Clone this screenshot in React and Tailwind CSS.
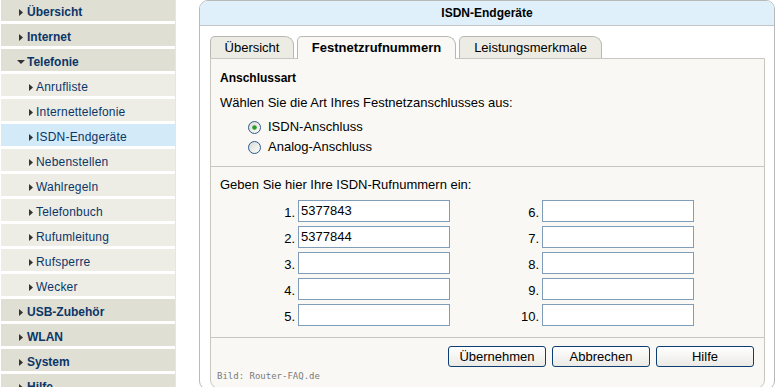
import React from 'react';

const menu = [
  { name: 'Übersicht', level: 0 },
  { name: 'Internet', level: 0 },
  { name: 'Telefonie', level: 0, open: true },
  { name: 'Anrufliste', level: 1 },
  { name: 'Internettelefonie', level: 1 },
  { name: 'ISDN-Endgeräte', level: 1, active: true },
  { name: 'Nebenstellen', level: 1 },
  { name: 'Wahlregeln', level: 1 },
  { name: 'Telefonbuch', level: 1 },
  { name: 'Rufumleitung', level: 1 },
  { name: 'Rufsperre', level: 1 },
  { name: 'Wecker', level: 1 },
  { name: 'USB-Zubehör', level: 0 },
  { name: 'WLAN', level: 0 },
  { name: 'System', level: 0 },
  { name: 'Hilfe', level: 0 },
];

const numbers = ['5377843', '5377844', '', '', '', '', '', '', '', ''];

const ArrowRight = () => (
  <svg width="4" height="7" viewBox="0 0 4 7" className="shrink-0">
    <path d="M0 0 L4 3.5 L0 7 Z" fill="#333333" />
  </svg>
);

const ArrowDown = () => (
  <svg width="8" height="4" viewBox="0 0 8 4" className="shrink-0">
    <path d="M0 0 L8 0 L4 4 Z" fill="#333333" />
  </svg>
);

const Radio = ({ checked }) => (
  <svg width="13" height="13" viewBox="0 0 13 13" className="shrink-0">
    <defs>
      <linearGradient id={checked ? 'rg1' : 'rg2'} x1="0" y1="0" x2="1" y2="1">
        <stop offset="0" stopColor="#d8d8d2" />
        <stop offset="1" stopColor="#ffffff" />
      </linearGradient>
    </defs>
    <circle cx="6.5" cy="6.5" r="6" fill={`url(#${checked ? 'rg1' : 'rg2'})`} stroke="#2a5a8a" strokeWidth="1" />
    {checked && <circle cx="6.5" cy="6.5" r="2.3" fill="#2b9b2b" />}
  </svg>
);

const Sidebar = () => (
  <div className="w-[176px] pl-px mt-[-1px] flex flex-col gap-[3px] border-r border-[#e6e6de]">
    {menu.map((item) => {
      const bg = item.active ? 'bg-[#d3eaf8]' : item.level === 0 ? 'bg-[#e0dfd3]' : 'bg-[#edece5]';
      return (
        <div key={item.name} className={`h-[22px] shrink-0 flex items-center pt-[4px] ${bg}`}>
          {item.level === 0 ? (
            item.open ? (
              <div className="pl-[16px] flex items-center gap-[2px]">
                <ArrowDown />
                <span className="text-[12px] font-bold text-[#0b3668]">{item.name}</span>
              </div>
            ) : (
              <div className="pl-[18px] flex items-center gap-[4px]">
                <ArrowRight />
                <span className="text-[12px] font-bold text-[#0b3668]">{item.name}</span>
              </div>
            )
          ) : (
            <div className="pl-[28px] flex items-center gap-[3px]">
              <ArrowRight />
              <span className="text-[12px] text-[#0b3668] tracking-[0.2px]">{item.name}</span>
            </div>
          )}
        </div>
      );
    })}
  </div>
);

const NumberGroup = ({ start, labelW }) => (
  <div className="flex flex-col gap-[4px]">
    {numbers.slice(start, start + 5).map((n, i) => (
      <div key={i} className="flex items-center h-[22px]">
        <span className={`${labelW} text-right text-[13px] pt-[3px]`}>{start + i + 1}.</span>
        <div className="ml-[3px] w-[152px] h-[22px] border border-[#7f9db9] bg-white text-[13px] leading-[20px] pl-[2px]">
          {n}
        </div>
      </div>
    ))}
  </div>
);

const Button = ({ children }) => (
  <button className="w-[98px] h-[21px] border border-[#0d3f73] rounded-[3px] bg-gradient-to-b from-[#ffffff] to-[#ebeae5] text-[13px] leading-[19px] text-black">
    {children}
  </button>
);

export default function App() {
  return (
    <div className="h-[387px] w-[776px] overflow-hidden bg-white flex text-black" style={{ fontFamily: '"Liberation Sans", Arial, sans-serif' }}>
      <Sidebar />
      <div className="ml-[23px] w-[576px] h-[390px] shrink-0 border border-[#b9b9b9] rounded-[9px] bg-white flex flex-col">
        <div className="h-[25px] shrink-0 bg-[#dff0fb] border-b border-[#c4c4c4] rounded-t-[8px] flex items-center justify-center">
          <span className="text-[12px] font-bold">ISDN-Endgeräte</span>
        </div>
        <div className="mt-[10px] ml-[10px] mr-[9px] flex items-end h-[22px]">
          <div className="w-[84px] h-[22px] bg-[#ecebe4] border border-b-0 border-[#b8b8b0] rounded-tl-[5px] rounded-tr-[9px] flex items-center justify-center text-[13px]">
            Übersicht
          </div>
          <div className="ml-[3px] w-[159px] h-[23px] -mb-px relative z-10 bg-[#f9f8f4] border border-b-0 border-[#b8b8b0] rounded-tl-[5px] rounded-tr-[9px] flex items-center justify-center text-[13px] font-bold pb-px">
            Festnetzrufnummern
          </div>
          <div className="ml-[3px] w-[143px] h-[22px] bg-[#ecebe4] border border-b-0 border-[#b8b8b0] rounded-tl-[5px] rounded-tr-[9px] flex items-center justify-center text-[13px]">
            Leistungsmerkmale
          </div>
        </div>
        <div className="ml-[10px] mr-[9px] flex-1 border border-[#c8c7bf] rounded-b-[9px] bg-[#f9f8f4] flex flex-col">
          <div className="px-[9px] pt-[11px] pb-[9px] border-b border-[#c8c7bf]">
            <div className="text-[12px] font-bold leading-[16px]">Anschlussart</div>
            <div className="mt-[9px] text-[13px] leading-[16px]">Wählen Sie die Art Ihres Festnetzanschlusses aus:</div>
            <div className="mt-[6px] pl-[28px] flex flex-col">
              <label className="h-[20px] flex items-center gap-[7px] text-[13px]">
                <Radio checked />
                ISDN-Anschluss
              </label>
              <label className="h-[20px] flex items-center gap-[7px] text-[13px]">
                <Radio />
                Analog-Anschluss
              </label>
            </div>
          </div>
          <div className="px-[9px] pt-[10px] pb-[11px] border-b border-[#c8c7bf]">
            <div className="text-[13px] leading-[16px]">Geben Sie hier Ihre ISDN-Rufnummern ein:</div>
            <div className="mt-[7px] ml-[55px] flex">
              <NumberGroup start={0} labelW="w-[20px]" />
              <div className="ml-[67px]">
                <NumberGroup start={5} labelW="w-[22px]" />
              </div>
            </div>
          </div>
          <div className="pt-[8px] pr-[10px] flex justify-end gap-[6px]">
            <Button>Übernehmen</Button>
            <Button>Abbrechen</Button>
            <Button>Hilfe</Button>
          </div>
          <div className="mt-[4px] pl-[6px] text-[9px] leading-[10px] text-[#7a7a7a]" style={{ fontFamily: '"DejaVu Sans Mono", monospace' }}>
            Bild: Router-FAQ.de
          </div>
        </div>
      </div>
    </div>
  );
}
